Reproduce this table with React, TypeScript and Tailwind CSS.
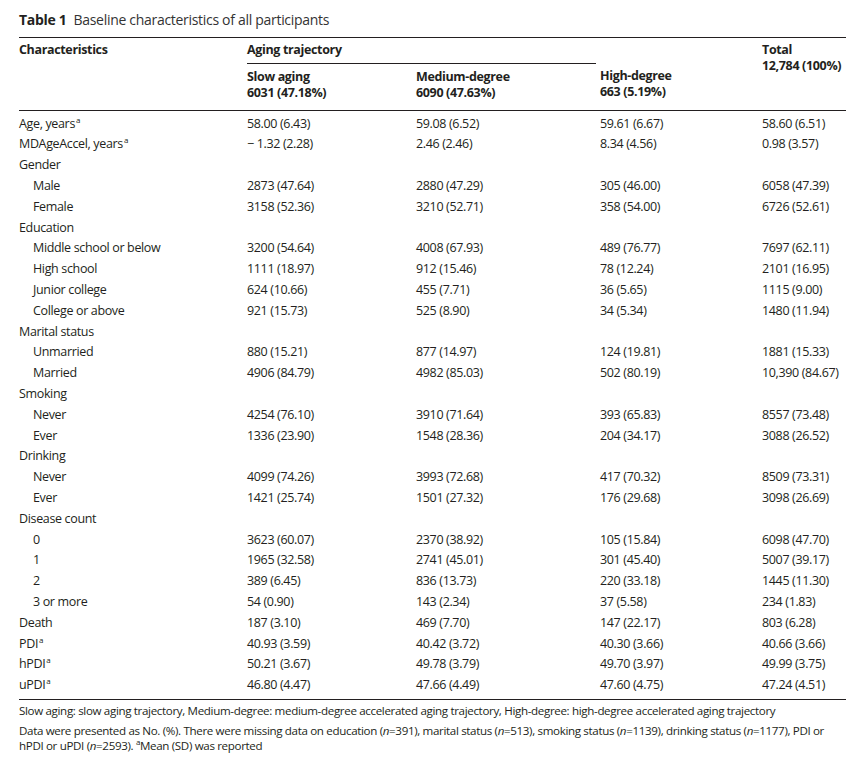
import React from 'react';

type Row = { label: string; sup?: boolean; indent?: boolean; vals?: string[] };

const rows: Row[] = [
  { label: 'Age, years', sup: true, vals: ['58.00 (6.43)', '59.08 (6.52)', '59.61 (6.67)', '58.60 (6.51)'] },
  { label: 'MDAgeAccel, years', sup: true, vals: ['\u2212 1.32 (2.28)', '2.46 (2.46)', '8.34 (4.56)', '0.98 (3.57)'] },
  { label: 'Gender' },
  { label: 'Male', indent: true, vals: ['2873 (47.64)', '2880 (47.29)', '305 (46.00)', '6058 (47.39)'] },
  { label: 'Female', indent: true, vals: ['3158 (52.36)', '3210 (52.71)', '358 (54.00)', '6726 (52.61)'] },
  { label: 'Education' },
  { label: 'Middle school or below', indent: true, vals: ['3200 (54.64)', '4008 (67.93)', '489 (76.77)', '7697 (62.11)'] },
  { label: 'High school', indent: true, vals: ['1111 (18.97)', '912 (15.46)', '78 (12.24)', '2101 (16.95)'] },
  { label: 'Junior college', indent: true, vals: ['624 (10.66)', '455 (7.71)', '36 (5.65)', '1115 (9.00)'] },
  { label: 'College or above', indent: true, vals: ['921 (15.73)', '525 (8.90)', '34 (5.34)', '1480 (11.94)'] },
  { label: 'Marital status' },
  { label: 'Unmarried', indent: true, vals: ['880 (15.21)', '877 (14.97)', '124 (19.81)', '1881 (15.33)'] },
  { label: 'Married', indent: true, vals: ['4906 (84.79)', '4982 (85.03)', '502 (80.19)', '10,390 (84.67)'] },
  { label: 'Smoking' },
  { label: 'Never', indent: true, vals: ['4254 (76.10)', '3910 (71.64)', '393 (65.83)', '8557 (73.48)'] },
  { label: 'Ever', indent: true, vals: ['1336 (23.90)', '1548 (28.36)', '204 (34.17)', '3088 (26.52)'] },
  { label: 'Drinking' },
  { label: 'Never', indent: true, vals: ['4099 (74.26)', '3993 (72.68)', '417 (70.32)', '8509 (73.31)'] },
  { label: 'Ever', indent: true, vals: ['1421 (25.74)', '1501 (27.32)', '176 (29.68)', '3098 (26.69)'] },
  { label: 'Disease count' },
  { label: '0', indent: true, vals: ['3623 (60.07)', '2370 (38.92)', '105 (15.84)', '6098 (47.70)'] },
  { label: '1', indent: true, vals: ['1965 (32.58)', '2741 (45.01)', '301 (45.40)', '5007 (39.17)'] },
  { label: '2', indent: true, vals: ['389 (6.45)', '836 (13.73)', '220 (33.18)', '1445 (11.30)'] },
  { label: '3 or more', indent: true, vals: ['54 (0.90)', '143 (2.34)', '37 (5.58)', '234 (1.83)'] },
  { label: 'Death', vals: ['187 (3.10)', '469 (7.70)', '147 (22.17)', '803 (6.28)'] },
  { label: 'PDI', sup: true, vals: ['40.93 (3.59)', '40.42 (3.72)', '40.30 (3.66)', '40.66 (3.66)'] },
  { label: 'hPDI', sup: true, vals: ['50.21 (3.67)', '49.78 (3.79)', '49.70 (3.97)', '49.99 (3.75)'] },
  { label: 'uPDI', sup: true, vals: ['46.80 (4.47)', '47.66 (4.49)', '47.60 (4.75)', '47.24 (4.51)'] },
];

const cols = 'grid grid-cols-[228px_169px_184px_162px_1fr]';

export default function App() {
  return (
    <div className="w-[861px] h-[768px] bg-white text-[#231f20] font-['Open_Sans',sans-serif] text-[12.5px] tracking-[-0.35px] leading-none">
      <div className="px-[19px] pt-[13px]">
        <div className="text-[14px] tracking-[-0.3px]">
          <span className="font-bold">Table 1</span>
          <span className="ml-[7px] text-[#333]">Baseline characteristics of all participants</span>
        </div>

        <div className="mt-[10px] border-t border-[#231f20] w-[827px]">
          {/* header */}
          <div className={`${cols} font-bold pt-[6px] pb-[9px] border-b border-[#231f20]`}>
            <div className="row-span-2">Characteristics</div>
            <div className="col-span-3 mr-[166px] border-b border-[#231f20] pb-[6px]">Aging trajectory</div>
            <div className="row-span-2 leading-[16px] -mt-[2px]">
              Total
              <br />
              12,784 (100%)
            </div>
            <div className="col-start-2 pt-[5px] leading-[16px]">
              Slow aging
              <br />
              6031 (47.18%)
            </div>
            <div className="pt-[5px] leading-[16px]">
              Medium-degree
              <br />
              6090 (47.63%)
            </div>
            <div className="pt-[4px] leading-[16px]">
              High-degree
              <br />
              663 (5.19%)
            </div>
          </div>

          {/* body */}
          <div className="pt-[3px] pb-[3px] border-b border-[#231f20]">
            {rows.map((r, i) => (
              <div key={i} className={`${cols} h-[20.8px] items-center`}>
                <div className={r.indent ? 'pl-[14px]' : ''}>
                  {r.label}
                  {r.sup && <sup className="text-[8px] -top-[5px] ml-[1px]">a</sup>}
                </div>
                {(r.vals ?? ['', '', '', '']).map((v, j) => (
                  <div key={j}>{v}</div>
                ))}
              </div>
            ))}
          </div>

          <div className="pt-[3px] text-[11.6px] leading-[15px]">
            <p>
              Slow aging: slow aging trajectory, Medium-degree: medium-degree accelerated aging trajectory, High-degree: high-degree accelerated aging trajectory
            </p>
            <p className="mt-[5px]">
              Data were presented as No. (%). There were missing data on education (<i>n</i>=391), marital status (<i>n</i>=513), smoking status (<i>n</i>=1139), drinking status (<i>n</i>=1177), PDI or
              hPDI or uPDI (<i>n</i>=2593). <sup className="text-[8px] -top-[5px]">a</sup>Mean (SD) was reported
            </p>
          </div>
        </div>
      </div>
    </div>
  );
}
